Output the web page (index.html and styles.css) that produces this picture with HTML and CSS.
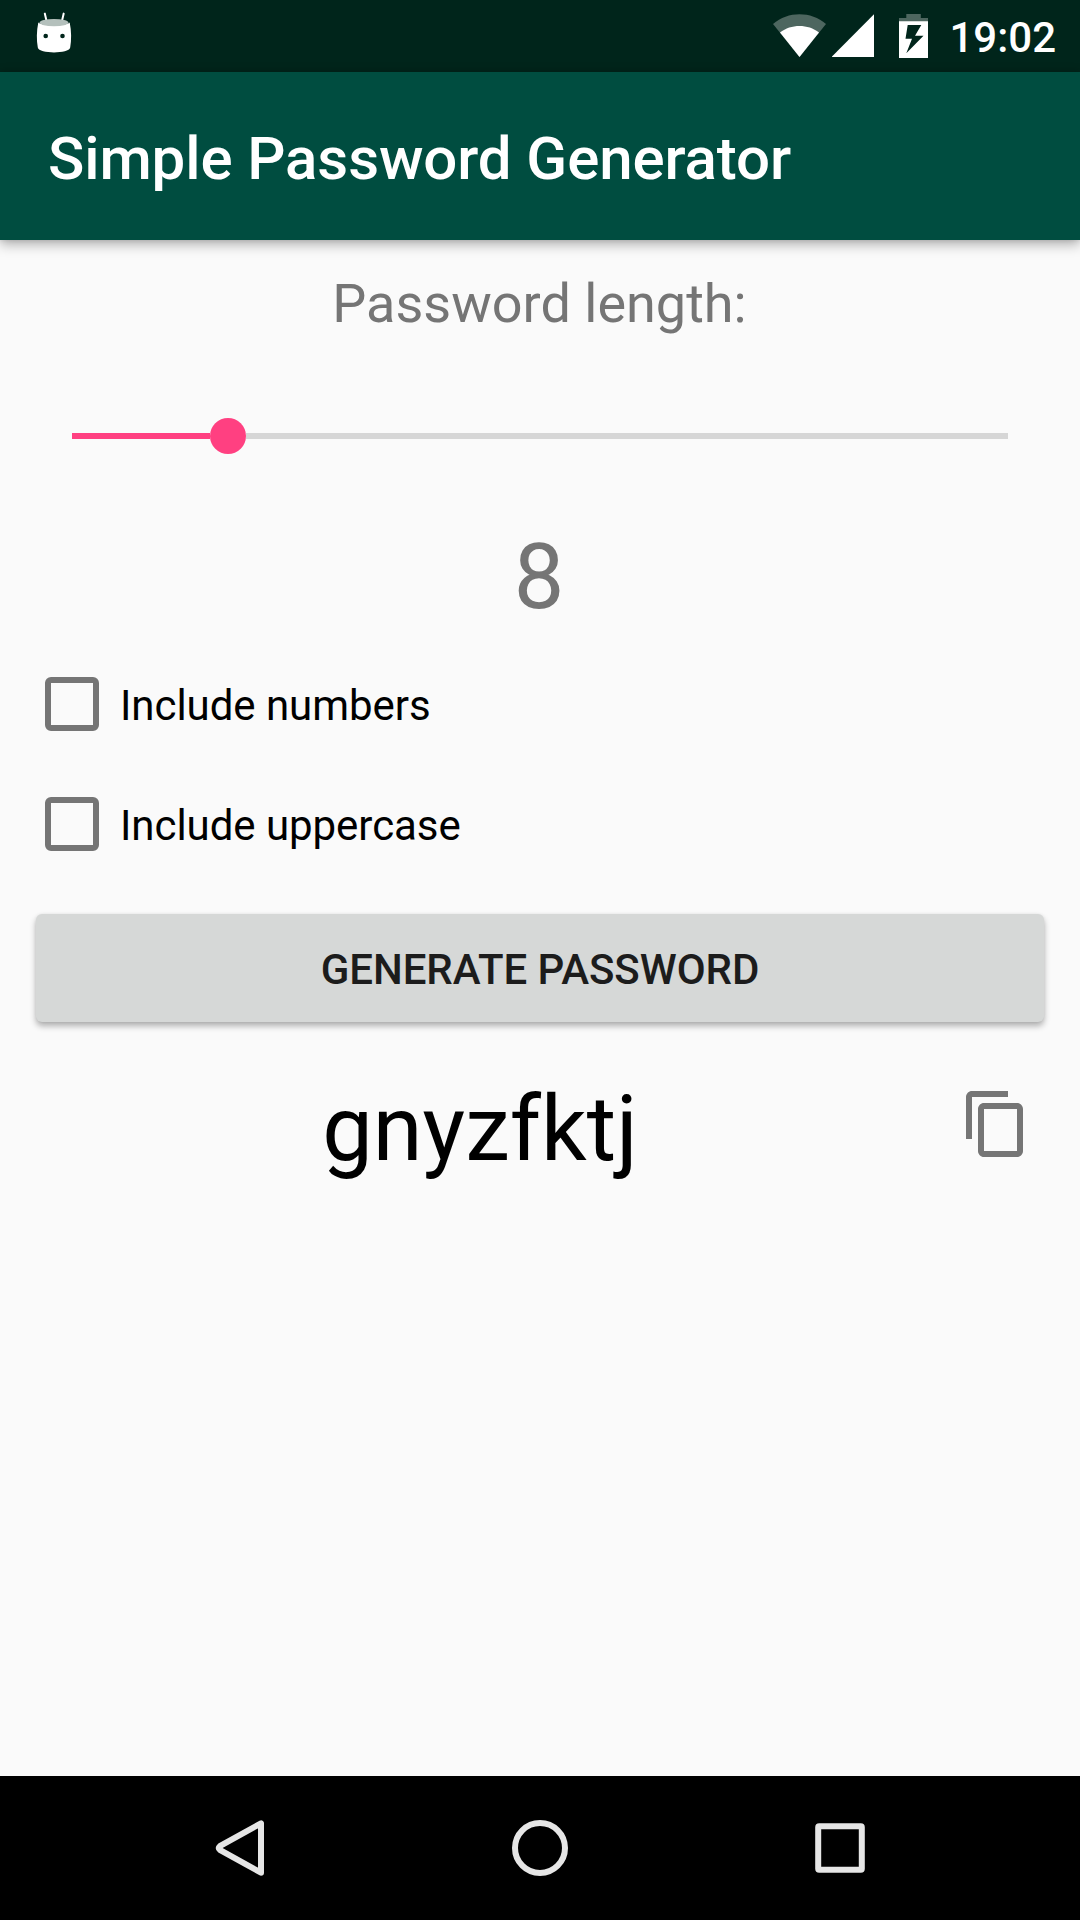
FILE: index.html
```html
<!DOCTYPE html>
<html lang="en">
<head>
<meta charset="utf-8">
<title>Simple Password Generator</title>
<link rel="stylesheet" href="styles.css">
</head>
<body>
<div class="screen">
  <div class="status-bar">
    <svg class="notification" width="36" height="48" viewBox="36 8 36 48">
      <path d="M44.8 13.6l1.8 7.7M63.7 13.6l-1.8 7.7" stroke="#fff" stroke-width="2" stroke-linecap="round" fill="none"/>
      <path d="M38.3 22.5C43 26.5 65 26.5 69.7 22.5C71.5 31 71.5 40 70.2 47.5C69 54 39 54 37.8 47.5C36.5 40 36.5 31 38.3 22.5Z" fill="#fff"/>
      <ellipse cx="54" cy="22.6" rx="14.5" ry="3.7" fill="#b4c0bc"/>
      <circle cx="45.7" cy="36" r="2.3" fill="#00251b"/>
      <circle cx="62.5" cy="36" r="2.3" fill="#00251b"/>
    </svg>
    <div class="status-icons">
      <svg width="54" height="48" viewBox="773 10 54 48">
        <path d="M799.5 57L773 24C788 11 811 11 826 24Z" fill="#4d665f"/>
        <path d="M799.5 57L780 32.4C791 23.8 808 23.8 819 32.4Z" fill="#fff"/>
      </svg>
      <svg class="signal" width="43" height="48" viewBox="832 10 43 48">
        <path d="M831.5 57H874V14.2Z" fill="#fff"/>
      </svg>
      <svg class="battery" width="29" height="48" viewBox="899 10 29 48">
        <path d="M906.3 14H920.8V18H928V22H899V18H906.3Z" fill="#4d665f"/>
        <path fill-rule="evenodd" d="M899 21.3H928V58H899ZM907.7 25L905.5 38.7H912L906.3 53.3L923.5 35.7H915L921.3 25Z" fill="#fff"/>
      </svg>
      <span class="clock">19:02</span>
    </div>
  </div>
  <header class="app-bar"><h1 class="title">Simple Password Generator</h1></header>
  <main class="content">
    <div class="length-label">Password length:</div>
    <div class="slider"><div class="filled"></div><div class="thumb"></div><div class="remaining"></div></div>
    <div class="length-value">8</div>
    <label class="option"><span class="box"></span><span class="option-text">Include numbers</span></label>
    <label class="option"><span class="box"></span><span class="option-text">Include uppercase</span></label>
    <button class="generate">GENERATE PASSWORD</button>
    <div class="result">
      <div class="password">gnyzfktj</div>
      <svg class="copy" width="72" height="72" viewBox="0 0 24 24">
        <path fill="#757575" d="M16 1H4c-1.1 0-2 .9-2 2v14h2V3h12V1zm3 4H8c-1.1 0-2 .9-2 2v14c0 1.1.9 2 2 2h11c1.1 0 2-.9 2-2V7c0-1.1-.9-2-2-2zm0 16H8V7h11v14z"/>
      </svg>
    </div>
  </main>
  <nav class="nav-bar">
    <svg width="60" height="60" viewBox="210 1818 60 60"><path d="M261 1823.3V1872.7L219.8 1849.8Q217.6 1848 219.8 1846.2Z" fill="none" stroke="#e6e6e6" stroke-width="6" stroke-linejoin="round"/></svg>
    <svg width="60" height="60" viewBox="0 0 60 60"><circle cx="30" cy="30" r="25" fill="none" stroke="#e6e6e6" stroke-width="6"/></svg>
    <svg width="60" height="60" viewBox="0 0 60 60"><rect x="8.2" y="8.2" width="43.6" height="43.6" rx="1" fill="none" stroke="#e6e6e6" stroke-width="6"/></svg>
  </nav>
</div>
</body>
</html>
```
FILE: styles.css
```css
* { box-sizing: border-box; }
body { margin: 0; font-family: Roboto, sans-serif; }
svg { display: block; flex: none; }
.screen {
  display: flex;
  flex-direction: column;
  width: 1080px;
  height: 1920px;
  background: #fafafa;
  overflow: hidden;
}
.status-bar {
  display: flex;
  justify-content: space-between;
  height: 72px;
  padding: 0 24px 0 36px;
  background: #00251b;
}
.notification { margin-top: 8px; }
.status-icons { display: flex; padding-top: 10px; }
.signal { margin-left: 5px; }
.battery { margin-left: 24px; }
.clock {
  margin-left: 21px;
  color: #fff;
  font-size: 42px;
  font-weight: 500;
  line-height: 55px;
}
.app-bar {
  display: flex;
  align-items: center;
  height: 168px;
  padding: 6px 48px 0;
  background: #004d40;
  box-shadow: 0 4px 12px rgba(0, 0, 0, .32), 0 0 5px rgba(0, 0, 0, .1);
}
.title {
  margin: 0;
  color: #fff;
  font-size: 60px;
  font-weight: 500;
  line-height: 70px;
  letter-spacing: -.1px;
}
.content { flex: 1; display: flex; flex-direction: column; padding-top: 32px; }
.length-label, .length-value { color: #757575; text-align: center; }
.length-label { padding-right: 1px; font-size: 54px; line-height: 63px; }
.slider {
  display: flex;
  align-items: center;
  height: 36px;
  margin: 83px 72px 0;
}
.filled { width: 138px; height: 6px; background: #ff4081; }
.thumb { width: 36px; height: 36px; border-radius: 50%; background: #ff4081; }
.remaining { flex: 1; height: 6px; background: #d6d6d6; }
.length-value { margin-top: 71px; padding-right: 2px; font-size: 90px; line-height: 105px; }
.option {
  display: flex;
  align-items: center;
  gap: 21px;
  height: 120px;
  padding-left: 45px;
}
.length-value + .option { margin-top: 14px; }
.box { width: 54px; height: 54px; border: 6px solid #757575; border-radius: 6px; }
.option-text { padding-top: 2px; color: #000; font-size: 42px; line-height: 49px; letter-spacing: -.05px; }
.generate {
  height: 108px;
  margin: 30px 36px 0;
  padding: 3px 0 0;
  border: 0;
  border-radius: 6px;
  background: #d6d8d7;
  box-shadow: 0 4px 6px rgba(0, 0, 0, .3), 0 0 3px rgba(0, 0, 0, .06);
  color: #1c1c1c;
  font: 500 42px/49px Roboto, sans-serif;
  letter-spacing: -.05px;
}
.result { display: flex; margin-top: 55px; }
.password {
  width: 960px;
  color: #000;
  font-size: 90px;
  line-height: 105px;
  text-align: center;
}
.copy { margin-top: 11px; }
.nav-bar {
  display: flex;
  justify-content: center;
  align-items: center;
  gap: 240px;
  height: 144px;
  background: #000;
}
```
